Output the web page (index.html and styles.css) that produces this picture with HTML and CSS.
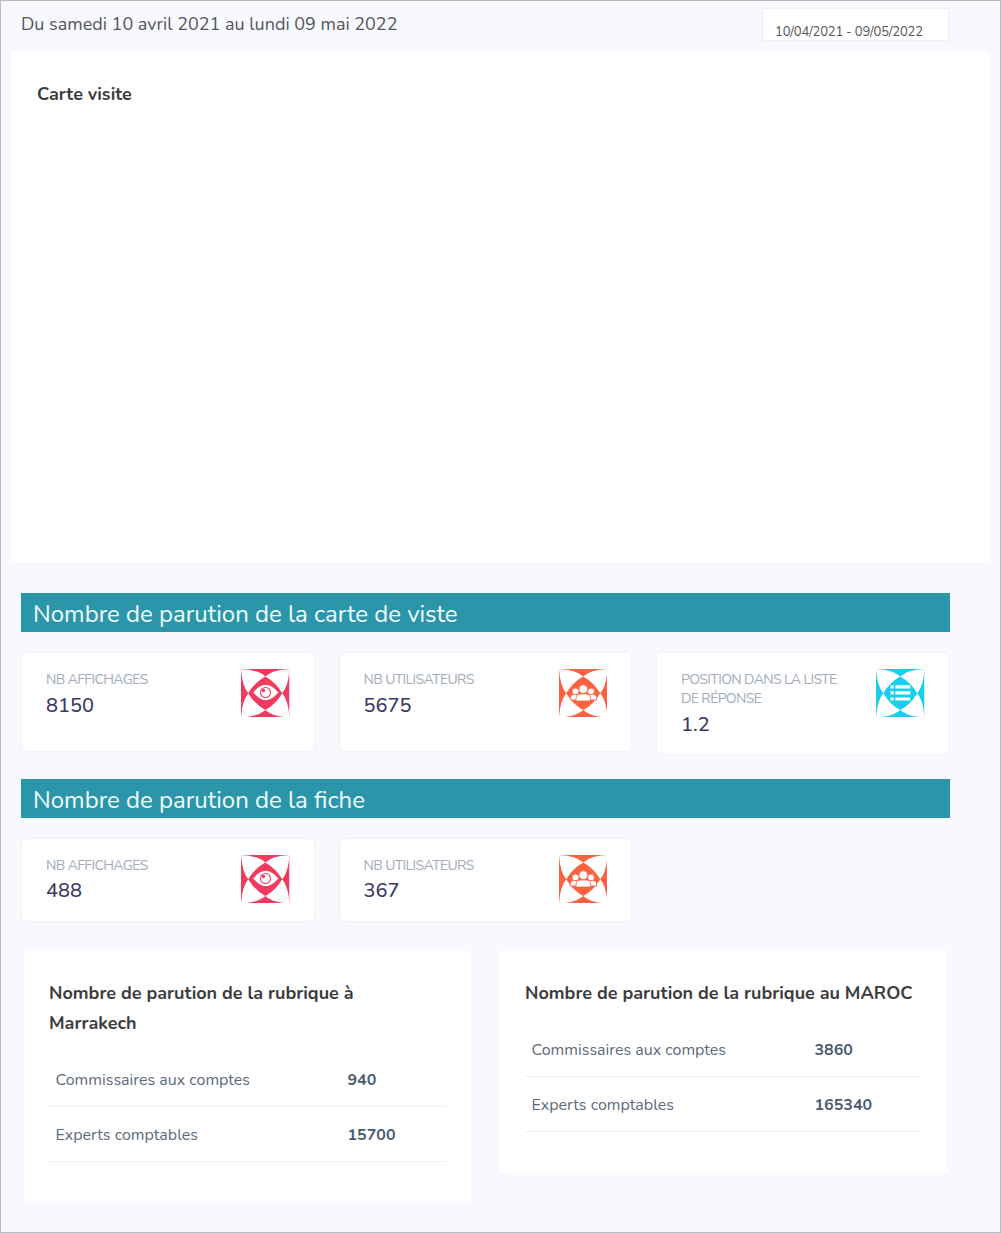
FILE: index.html
```html
<!DOCTYPE html>
<html lang="fr">
<head>
<meta charset="utf-8">
<title>Statistiques</title>
<link rel="stylesheet" href="styles.css">
</head>
<body>
<svg class="defs" aria-hidden="true">
  <defs>
    <g id="petals" fill="#fff">
      <path d="M0 0Q17 .8 24.300 7.400Q14 13 7.200 24.200Q1.200 17 0 0Z"/>
      <path d="M48.500 0Q31.500 .8 24.200 7.400Q34.500 13 41.300 24.200Q47.300 17 48.500 0Z"/>
      <path d="M0 48.500Q17 47.700 24.300 41.100Q14 35.500 7.200 24.200Q1.200 31.500 0 48.500Z"/>
      <path d="M48.500 48.500Q31.500 47.700 24.200 41.100Q34.500 35.500 41.300 24.200Q47.300 31.500 48.500 48.500Z"/>
    </g>
    <symbol id="icon-eye" viewBox="0 0 48.500 48.500">
      <rect width="48.500" height="48.500" fill="#f33a5e"/>
      <use href="#petals"/>
      <path d="M12.300 23.500Q24.500 8 37.300 23.500Q24.500 39 12.300 23.500Z" fill="#fff"/>
      <circle cx="24.500" cy="23.500" r="5" fill="#fff" stroke="#f33a5e" stroke-width="1.100"/>
      <circle cx="22.500" cy="21.500" r="1.700" fill="#f33a5e"/>
    </symbol>
    <symbol id="icon-users" viewBox="0 0 48.500 48.500">
      <rect width="48.500" height="48.500" fill="#fb6340"/>
      <use href="#petals"/>
      <g fill="#fff" stroke="#fb6340" stroke-width=".8">
        <circle cx="16.500" cy="22.500" r="3.400"/>
        <circle cx="32" cy="22.500" r="3.400"/>
        <path d="M11.500 31v-2.500q0-3 3-3h4q3 0 3 3V31z"/>
        <path d="M27.500 31v-2.500q0-3 3-3h4q3 0 3 3V31z"/>
        <circle cx="24.300" cy="20.200" r="4.400"/>
        <path d="M17 32v-3q0-4 4-4h6.600q4 0 4 4v3z"/>
      </g>
    </symbol>
    <symbol id="icon-list" viewBox="0 0 48.500 48.500">
      <rect width="48.500" height="48.500" fill="#18cdee"/>
      <use href="#petals"/>
      <path d="M14.500 16.200h3.200v3.200h-3.200zm4.800 0h15v3.200h-15zM14.500 22.300h3.200v3.200h-3.200zm4.800 0h15v3.200h-15zM14.500 28.400h3.200v3.200h-3.200zm4.800 0h15v3.200h-15z" fill="#fff"/>
    </symbol>
  </defs>
</svg>
<main class="page">
  <header class="topbar">
    <span class="period">Du samedi 10 avril 2021 au lundi 09 mai 2022</span>
    <div class="daterange">10/04/2021 - 09/05/2022</div>
  </header>
  <section class="visit"><h3 class="title">Carte visite</h3></section>
  <h2 class="banner">Nombre de parution de la carte de viste</h2>
  <section class="stats stats-card">
    <article class="stat">
      <div class="stat-body"><div class="label">NB AFFICHAGES</div><div class="value">8150</div></div>
      <svg class="icon"><use href="#icon-eye"/></svg>
    </article>
    <article class="stat">
      <div class="stat-body"><div class="label">NB UTILISATEURS</div><div class="value">5675</div></div>
      <svg class="icon"><use href="#icon-users"/></svg>
    </article>
    <article class="stat stat-tall">
      <div class="stat-body"><div class="label">POSITION DANS LA LISTE<br>DE RÉPONSE</div><div class="value">1.2</div></div>
      <svg class="icon"><use href="#icon-list"/></svg>
    </article>
  </section>
  <h2 class="banner">Nombre de parution de la fiche</h2>
  <section class="stats stats-sheet">
    <article class="stat">
      <div class="stat-body"><div class="label">NB AFFICHAGES</div><div class="value">488</div></div>
      <svg class="icon"><use href="#icon-eye"/></svg>
    </article>
    <article class="stat">
      <div class="stat-body"><div class="label">NB UTILISATEURS</div><div class="value">367</div></div>
      <svg class="icon"><use href="#icon-users"/></svg>
    </article>
  </section>
  <section class="panels">
    <article class="panel">
      <h3 class="title">Nombre de parution de la rubrique à<br>Marrakech</h3>
      <div class="rows">
        <div class="row row-city"><span>Commissaires aux comptes</span><b>940</b></div>
        <div class="row row-city"><span>Experts comptables</span><b>15700</b></div>
      </div>
    </article>
    <article class="panel">
      <h3 class="title">Nombre de parution de la rubrique au MAROC</h3>
      <div class="rows">
        <div class="row"><span>Commissaires aux comptes</span><b>3860</b></div>
        <div class="row"><span>Experts comptables</span><b>165340</b></div>
      </div>
    </article>
  </section>
</main>
</body>
</html>
```
FILE: styles.css
```css
* { box-sizing: border-box; }
body { margin: 0; background: #f8f9ff; font-family: Nunito, Lato, sans-serif; color: #525f7f; }
h2, h3 { margin: 0; }
.defs { display: block; width: 0; height: 0; }
.page { height: 1233px; border: 1px solid #b9bac2; padding: 7px 11px 0; }
.topbar { display: flex; justify-content: space-between; align-items: flex-start; height: 44px; padding: 0 40px 0 9px; }
.period { padding-top: 1px; font-size: 18px; line-height: 30px; color: #555559; white-space: nowrap; }
.daterange { width: 187px; height: 33px; border: 1px solid #eeeff4; background: #fff; padding: 14px 0 0 12px; font-size: 13px; line-height: 18px; letter-spacing: -.17px; color: #555; white-space: nowrap; }
.visit { height: 510px; margin-right: -1px; padding: 27px 25px; background: #fff; }
.title { font-size: 18px; line-height: 30px; font-weight: 700; color: #3c3c3e; white-space: nowrap; }
.banner { width: 929px; height: 39px; margin: 31px 0 0 9px; padding-left: 12px; background: #2b96aa; color: #f2fdff; font-size: 24px; line-height: 42px; font-weight: 400; white-space: nowrap; }
.stats { display: grid; grid-template-columns: repeat(3, 293.5px); column-gap: 24px; align-items: start; margin: 20px 0 0 9px; }
.stats-card { height: 103px; margin-bottom: -7px; }
.stat { display: flex; justify-content: space-between; height: 99.5px; border: 1px solid #f1f2f7; border-radius: 6px; background: #fff; padding: 15px 24px 0; }
.stat-tall { height: 103px; }
.stats-sheet .stat { height: 83.5px; }
.stat-body { padding-top: 2px; }
.label { font-size: 14px; line-height: 19px; letter-spacing: -.6px; color: #a0abb9; white-space: nowrap; }
.value { font-size: 20px; line-height: 33px; font-weight: 500; color: #3b3966; }
.stats-sheet .value { line-height: 31px; }
.icon { width: 48.5px; height: 48.5px; flex: none; margin-top: .6px; }
.panels { display: grid; grid-template-columns: 446.5px 446.5px; column-gap: 29.5px; align-items: start; margin: 29px 0 0 12px; }
.panel { background: #fff; padding: 27px 25px 41px; }
.rows { padding-top: 14px; }
.row { display: grid; grid-template-columns: 283px 1fr; height: 55px; border-bottom: 1px solid #eff0f3; padding-left: 6.500px; font-size: 16px; line-height: 56px; color: #5c6b7c; white-space: nowrap; }
.row-city { grid-template-columns: 292px 1fr; }
.row b { font-weight: 700; color: #4b5c70; }
```
